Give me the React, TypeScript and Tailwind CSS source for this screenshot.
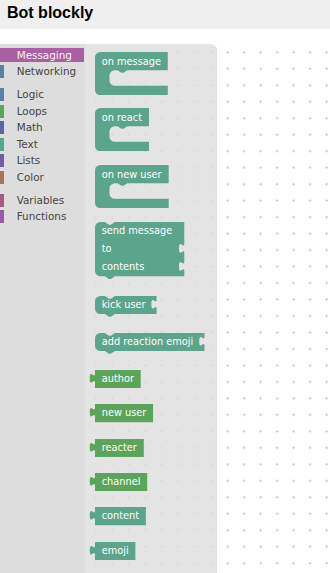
import React from 'react';

const R = 5.3;
const NO = 9.9;
const TAB_OFF = 3.3;
const TAB_H = 9.9;
const L = 6;
const notchR = 'l 3.96 2.64 l 1.98 0 l 3.96 -2.64';
const notchL = 'l -3.96 2.64 l -1.98 0 l -3.96 -2.64';
const tabDown = 'c 0 6.6 -5.28 -5.28 -5.28 4.95 s 5.28 -1.65 5.28 4.95';
const tabUp = 'c 0 -6.6 -5.28 5.28 -5.28 -4.95 s 5.28 1.65 5.28 -4.95';
const FONT = "'DejaVu Sans', 'Noto Sans', sans-serif";
const TEAL = '#5ba58c';
const GREEN = '#5ba55b';

function BlockText({ x, y, children }: { x: number; y: number; children: React.ReactNode }) {
  return (
    <text x={x} y={y} fill="#ffffff" fontSize={9.8} fontFamily={FONT}>
      {children}
    </text>
  );
}

function HatBlock({ text, w, className }: { text: string; w: number; className?: string }) {
  const topH = 18.2;
  const mouthH = 15.6;
  const H = 43.2;
  const innerX = L + 14.5;
  const d = [
    `M ${L} ${R}`,
    `A ${R} ${R} 0 0 1 ${L + R} 0`,
    `H ${L + w}`,
    `V ${topH}`,
    `H ${innerX + 8 + 9.9}`,
    notchL,
    `H ${innerX + R}`,
    `A ${R} ${R} 0 0 0 ${innerX} ${topH + R}`,
    `V ${topH + mouthH - R}`,
    `A ${R} ${R} 0 0 0 ${innerX + R} ${topH + mouthH}`,
    `H ${L + w}`,
    `V ${H}`,
    `H ${L + R}`,
    `A ${R} ${R} 0 0 1 ${L} ${H - R}`,
    'Z',
  ].join(' ');
  return (
    <svg className={className} width={L + w + 1} height={H} viewBox={`0 0 ${L + w + 1} ${H}`}>
      <path d={d} fill={TEAL} />
      <BlockText x={L + 6.7} y={12.6}>{text}</BlockText>
    </svg>
  );
}

function StatementBlock({
  rows,
  w,
  className,
}: {
  rows: { text: string; input: boolean }[];
  w: number;
  className?: string;
}) {
  const rowH = 18.1;
  const H = rows.length * rowH;
  let d = `M ${L} ${R} A ${R} ${R} 0 0 1 ${L + R} 0 H ${L + NO} ${notchR} H ${L + w}`;
  rows.forEach((r) => {
    if (r.input) {
      d += ` v ${TAB_OFF} ${tabDown} v ${rowH - TAB_OFF - TAB_H}`;
    } else {
      d += ` v ${rowH}`;
    }
  });
  d += ` H ${L + NO + 9.9} ${notchL} H ${L + R} A ${R} ${R} 0 0 1 ${L} ${H - R} Z`;
  return (
    <svg className={className} width={L + w + 1} height={H + 3} viewBox={`0 0 ${L + w + 1} ${H + 3}`}>
      <path d={d} fill={TEAL} />
      {rows.map((r, i) => (
        <BlockText key={i} x={L + 6.7} y={i * rowH + 12}>
          {r.text}
        </BlockText>
      ))}
    </svg>
  );
}

function ValueBlock({
  text,
  w,
  color,
  className,
}: {
  text: string;
  w: number;
  color: string;
  className?: string;
}) {
  const H = 18.3;
  const d = `M ${L} 0 H ${L + w} V ${H} H ${L} V ${TAB_OFF + TAB_H} ${tabUp} Z`;
  return (
    <svg className={className} width={L + w + 1} height={H} viewBox={`0 0 ${L + w + 1} ${H}`}>
      <path d={d} fill={color} />
      <BlockText x={L + 6.7} y={12.4}>{text}</BlockText>
    </svg>
  );
}

type Cat = { name: string; stripe: string; selected?: boolean } | { sep: true };

const cats: Cat[] = [
  { name: 'Messaging', stripe: 'bg-[#ab5fa3]', selected: true },
  { name: 'Networking', stripe: 'bg-[#5b80a5]' },
  { sep: true },
  { name: 'Logic', stripe: 'bg-[#5b80a5]' },
  { name: 'Loops', stripe: 'bg-[#5ba55b]' },
  { name: 'Math', stripe: 'bg-[#5b67a5]' },
  { name: 'Text', stripe: 'bg-[#5ba58c]' },
  { name: 'Lists', stripe: 'bg-[#745ba5]' },
  { name: 'Color', stripe: 'bg-[#a5745b]' },
  { sep: true },
  { name: 'Variables', stripe: 'bg-[#a55b80]' },
  { name: 'Functions', stripe: 'bg-[#995ba5]' },
];

function Toolbox() {
  return (
    <nav
      className="relative z-10 flex h-full w-[85px] shrink-0 flex-col gap-[2.5px] bg-[#dddddd] pt-[4px]"
      style={{ fontFamily: FONT }}
    >
      {cats.map((c, i) =>
        'sep' in c ? (
          <div key={i} className="h-[4px]" />
        ) : (
          <div
            key={i}
            className={
              c.selected
                ? 'flex h-[14px] w-[84px] items-center bg-[#ab5fa3]'
                : 'flex h-[14px] w-[84px] items-center'
            }
          >
            <span className={`h-[13px] w-[4px] ${c.stripe}`} />
            <span
              className={
                c.selected
                  ? 'ml-[12.7px] text-[10.4px] leading-none text-[#f4f4f4]'
                  : 'ml-[12.7px] text-[10.4px] leading-none text-[#444444]'
              }
            >
              {c.name}
            </span>
          </div>
        )
      )}
    </nav>
  );
}

function Flyout() {
  return (
    <div className="relative z-10 flex h-full w-[132px] shrink-0 flex-col items-start overflow-hidden rounded-tr-[6px] bg-[#dddddd]/80 pl-[4px] pt-[7.5px]">
      <HatBlock text="on message" w={72.8} className="block shrink-0" />
      <HatBlock text="on react" w={54} className="mt-[13.6px] block shrink-0" />
      <HatBlock text="on new user" w={73.7} className="mt-[13.6px] block shrink-0" />
      <StatementBlock
        className="mt-[14px] block shrink-0"
        w={89.3}
        rows={[
          { text: 'send message', input: false },
          { text: 'to', input: true },
          { text: 'contents', input: true },
        ]}
      />
      <StatementBlock
        className="mt-[16.4px] block shrink-0"
        w={61.6}
        rows={[{ text: 'kick user', input: true }]}
      />
      <StatementBlock
        className="mt-[15.6px] block shrink-0"
        w={109.5}
        rows={[{ text: 'add reaction emoji', input: true }]}
      />
      <ValueBlock text="author" w={45.7} color={GREEN} className="mt-[16.3px] block shrink-0" />
      <ValueBlock text="new user" w={58.1} color={GREEN} className="mt-[16px] block shrink-0" />
      <ValueBlock text="reacter" w={48.8} color={GREEN} className="mt-[16px] block shrink-0" />
      <ValueBlock text="channel" w={52.2} color={GREEN} className="mt-[16px] block shrink-0" />
      <ValueBlock text="content" w={50.9} color={TEAL} className="mt-[16px] block shrink-0" />
      <ValueBlock text="emoji" w={40.4} color={TEAL} className="mt-[16px] block shrink-0" />
    </div>
  );
}

function Grid() {
  return (
    <svg className="absolute inset-0 h-full w-full" aria-hidden="true">
      <defs>
        <pattern id="bgrid" x={5.22} y={0.06} width={16.48} height={16.48} patternUnits="userSpaceOnUse">
          <line x1={7} y1={8.24} x2={9.48} y2={8.24} stroke="#c4c4c4" strokeWidth={1} />
          <line x1={8.24} y1={7} x2={8.24} y2={9.48} stroke="#c4c4c4" strokeWidth={1} />
        </pattern>
      </defs>
      <rect width="100%" height="100%" fill="url(#bgrid)" />
    </svg>
  );
}

export default function App() {
  return (
    <div className="h-[573px] w-[330px] overflow-hidden bg-white">
      <header className="h-[29px] bg-[#efefef] pl-[7px] pt-[3.5px]">
        <h1
          className="text-[16px] font-bold leading-[18px] text-black"
          style={{ fontFamily: "'Liberation Sans', Arial, sans-serif" }}
        >
          Bot blockly
        </h1>
      </header>
      <div className="relative mt-[15px] flex h-[529px] bg-white">
        <Grid />
        <Toolbox />
        <Flyout />
      </div>
    </div>
  );
}
